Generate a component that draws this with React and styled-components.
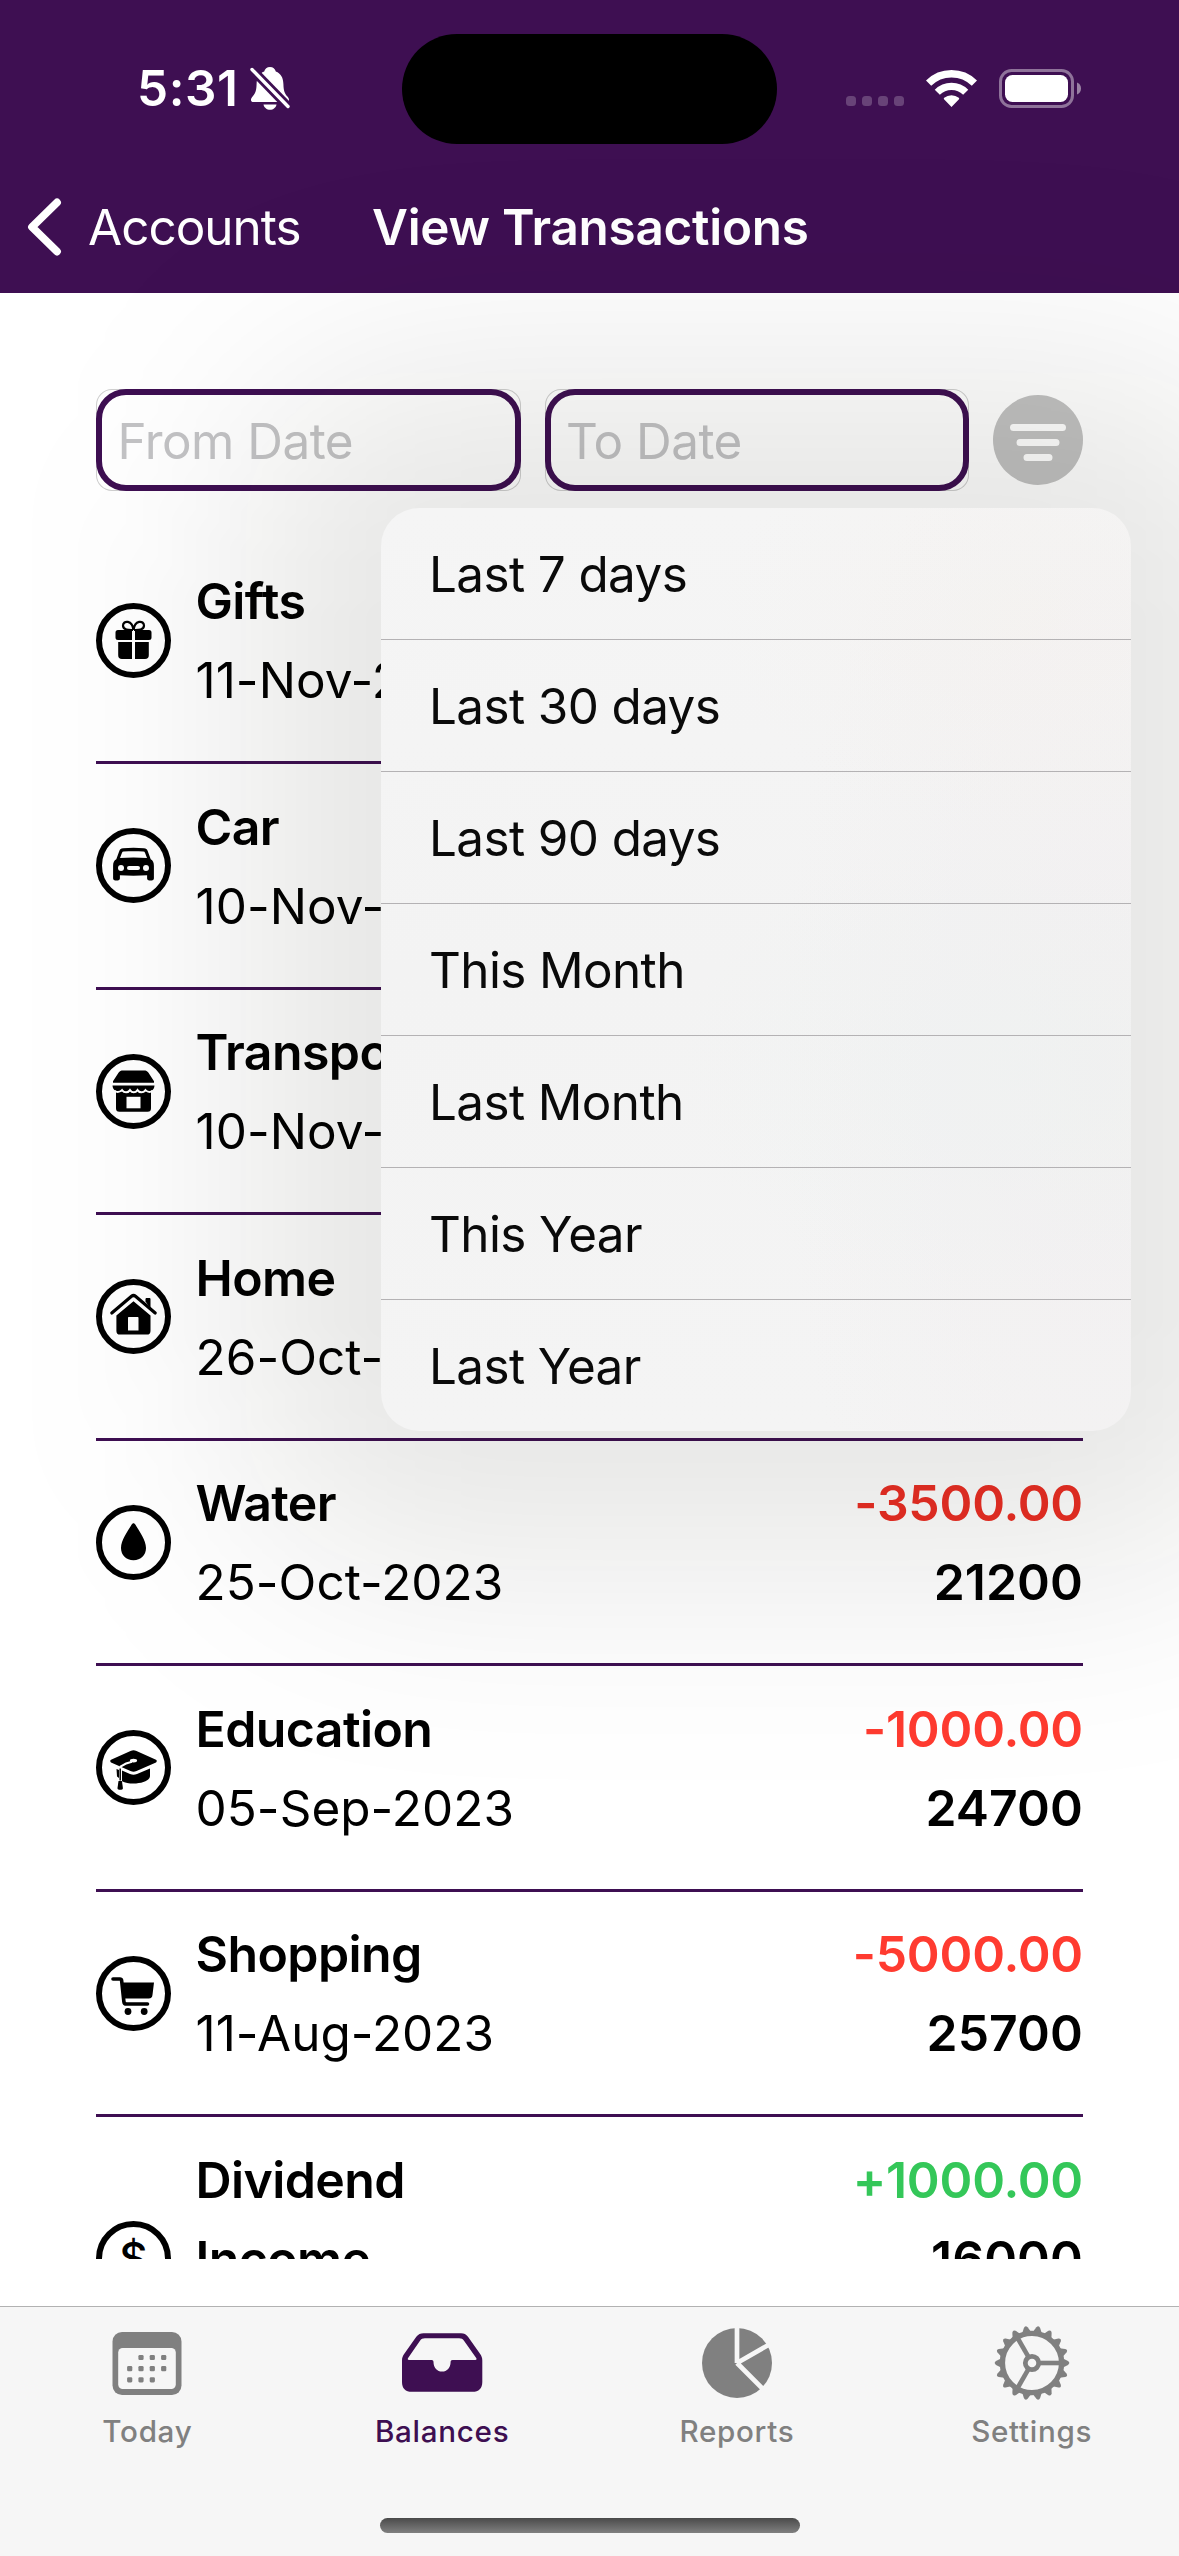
import React from "react";
import styled, { createGlobalStyle } from "styled-components";

const PURPLE = "#3e0f52";
const GREY = "#808080";

const GlobalStyle = createGlobalStyle`
  * { box-sizing: border-box; }
  html, body { margin: 0; padding: 0; background: #fff; }
  body { font-family: Inter, "Liberation Sans", sans-serif; -webkit-font-smoothing: antialiased; }
  svg { display: block; flex: none; }
`;

const Screen = styled.div`
  position: relative;
  display: flex;
  flex-direction: column;
  width: 1179px;
  height: 2556px;
  overflow: hidden;
  background: #fff;
  color: #000;
  font-size: 49.4px;
`;

const Header = styled.header`
  height: 293px;
  flex: none;
  background: ${PURPLE};
  color: #fff;
`;

const StatusBar = styled.div`
  display: grid;
  grid-template-columns: 402px 375px 1fr;
  height: 161px;
  padding-top: 33px;
`;

const Clock = styled.div`
  display: flex;
  align-items: center;
  height: 110px;
  padding-left: 137px;
  font-weight: 600;
  letter-spacing: 0.6px;
  gap: 11px;
`;

const Island = styled.div`
  height: 110px;
  margin-top: 1px;
  border-radius: 55px;
  background: #000;
`;

const StatusIcons = styled.div`
  display: flex;
  align-items: center;
  height: 110px;
  padding-left: 69px;
`;

const NavBar = styled.nav`
  display: flex;
  align-items: center;
  height: 132px;
  padding-left: 27px;
`;

const BackLabel = styled.span`
  width: 310px;
  padding-left: 26px;
  line-height: 60px;
  letter-spacing: -0.95px;
`;

const Title = styled.h1`
  margin: 0;
  font-size: inherit;
  font-weight: 600;
  line-height: 60px;
  letter-spacing: -0.25px;
`;

const Content = styled.main`
  display: flex;
  flex-direction: column;
  flex: 1;
  padding: 96px 96px 0;
`;

const Filters = styled.div`
  display: flex;
  align-items: center;
  gap: 24px;
  height: 102px;
  flex: none;
`;

const FieldFrame = styled.div`
  width: 425px;
  height: 102px;
  border-radius: 16px;
  box-shadow: inset 0 0 0 1px #cfcfcf;
`;

const Field = styled.div`
  display: flex;
  align-items: center;
  height: 102px;
  padding: 2px 0 0 15.5px;
  border: 6px solid ${PURPLE};
  border-radius: 30px;
  background: #fff;
  color: #c3c3c5;
  letter-spacing: -0.5px;
`;

const List = styled.section`
  margin-top: 47.5px;
  height: 1720.5px;
  overflow: hidden;
`;

const Row = styled.article`
  display: flex;
  align-items: center;
  padding: 22.5px 0 42px;
  border-bottom: 3px solid ${PURPLE};
`;

const Badge = styled.div`
  display: flex;
  align-items: center;
  justify-content: center;
  width: 75px;
  height: 75px;
  flex: none;
  border: 6px solid #000;
  border-radius: 50%;
  background: #fff;
  svg { margin: -6px; }
`;

const Dollar = styled.span`
  font-size: 44px;
  font-weight: 500;
  line-height: 63px;
`;

const Details = styled.div`
  flex: 1;
  height: ${(p) => (p.$tall ? 237 : 158)}px;
  align-self: flex-start;
  padding: 1px 0 0 24.5px;
  line-height: 79px;
`;

const Name = styled.div`
  font-size: 50px;
  font-weight: 600;
  letter-spacing: -0.6px;
`;

const TwoLineName = styled(Name)`
  width: 260px;
`;

const When = styled.div`
  letter-spacing: 0.08px;
`;

const Figures = styled.div`
  align-self: flex-start;
  height: 158px;
  padding-top: 1px;
  text-align: right;
  font-size: 49.8px;
  font-weight: 600;
  line-height: 79px;
`;

const Amount = styled.div`
  letter-spacing: -0.2px;
  color: ${(p) => (p.$positive ? "#34c759" : p.$dimmed ? "#eb2e24" : "#ff3b30")};
`;

const Balance = styled.div`
  letter-spacing: 0.1px;
`;

const MenuShade = styled.div`
  position: absolute;
  left: 246px;
  top: 373px;
  width: 1020px;
  height: 1193px;
  border-radius: 150px;
  background: rgba(10, 10, 0, 0.1);
  filter: blur(112px);
`;

const Menu = styled.div`
  position: absolute;
  left: 381px;
  top: 508px;
  width: 750px;
  border-radius: 38px;
  overflow: hidden;
  background:
    radial-gradient(ellipse 300px 220px at 640px 110px, rgba(245, 240, 236, 0.4), transparent),
    radial-gradient(ellipse 340px 240px at 640px 560px, rgba(238, 242, 241, 0.6), transparent),
    radial-gradient(ellipse 320px 700px at 720px 560px, rgba(241, 238, 239, 0.7), transparent),
    linear-gradient(#f5f5f5, #f3f3f3 50%, #f4f4f4);
`;

const MenuItem = styled.div`
  display: flex;
  align-items: center;
  height: ${(p) => (p.$last ? 131 : 132)}px;
  padding-left: 48px;
  border-bottom: ${(p) => (p.$last ? "none" : "1px solid #b4b2b4")};
  color: #0a0a0a;
  letter-spacing: -0.6px;
`;

const TabBar = styled.footer`
  display: grid;
  grid-template-columns: repeat(4, 1fr);
  grid-template-rows: 211px 38px;
  flex: none;
  height: 250px;
  border-top: 1px solid #b2b2b2;
  background: #f6f6f6;
`;

const Tab = styled.div`
  display: flex;
  flex-direction: column;
  align-items: center;
  padding-top: 16px;
  color: ${(p) => (p.$active ? PURPLE : GREY)};
  font-size: 29.6px;
  font-weight: 500;
  line-height: 36px;
  letter-spacing: 0.7px;
  svg { margin-bottom: 8px; }
`;

const HomeIndicator = styled.div`
  grid-column: 1 / -1;
  justify-self: center;
  width: 420px;
  height: 15px;
  border-radius: 8px;
  background: linear-gradient(#4a4a4a, #808080);
`;

const BellOff = () => (
  <svg width="40" height="44" viewBox="0 0 40 44" fill="#fff">
    <path d="M20 1c-3 0-5.200 1.800-5.800 4.600C9 7.600 6.800 12 6.600 18c-.2 7-1.300 9.500-4 12.500C0 33.400.6 36 3.500 36h33c2.900 0 3.500-2.600.9-5.500-2.700-3-3.800-5.500-4-12.500-.2-6-2.400-10.400-7.600-12.400C25.200 2.800 23 1 20 1z" />
    <path d="M13.500 38.500h13c-.6 3.200-3.200 5.300-6.500 5.300s-5.900-2.100-6.500-5.300z" />
    <path d="M2 3.500 38 40.500" stroke={PURPLE} strokeWidth="9" />
    <path d="M2 3.500 38 40.500" stroke="#fff" strokeWidth="3.400" strokeLinecap="round" />
  </svg>
);

const Signal = () => (
  <svg width="58" height="10" viewBox="0 0 58 10" fill="rgba(255,255,255,.22)">
    {[0, 16, 32, 48].map((x) => (
      <rect key={x} x={x} y="0" width="10" height="10" rx="3.500" />
    ))}
  </svg>
);

const SignalSlot = styled.div`
  padding: 26px 22px 0 0;
`;

const BatterySlot = styled.div`
  padding-left: 22px;
`;

const Wifi = () => (
  <svg width="51" height="37" viewBox="0 0 51 37" fill="none" stroke="#fff">
    <path d="M2.600 13.200a32.600 32.600 0 0 1 45.800 0" strokeWidth="7.400" />
    <path d="M11.300 22.200a20 20 0 0 1 28.400 0" strokeWidth="7.200" />
    <path d="M25.500 37 18 29.200c-.4-.5-.3-1 .2-1.400a11.500 11.500 0 0 1 14.600 0c.5.400.6.900.2 1.400z" fill="#fff" stroke="none" />
  </svg>
);

const Battery = () => (
  <svg width="83" height="39" viewBox="0 0 83 39">
    <rect x="1.500" y="1.500" width="72" height="36" rx="11" fill="none" stroke="#fff" strokeOpacity=".42" strokeWidth="3" />
    <rect x="6" y="6" width="63" height="27" rx="7.500" fill="#fff" />
    <path d="M78 13.500c2.600 1 4 3.300 4 6s-1.400 5-4 6z" fill="#fff" fillOpacity=".48" />
  </svg>
);

const Chevron = () => (
  <svg width="35" height="58" viewBox="0 0 35 58" fill="none" stroke="#fff" strokeWidth="7.800" strokeLinecap="round" strokeLinejoin="round">
    <path d="M30 4.500 5 29l25 24.500" />
  </svg>
);

const FilterIcon = () => (
  <svg width="90" height="90" viewBox="0 0 90 90">
    <circle cx="45" cy="45" r="45" fill="#c2c2c2" />
    <g stroke="#fff" strokeWidth="7" strokeLinecap="round">
      <path d="M20.500 32.500h49M27 47.500h36M34 62.500h22" />
    </g>
  </svg>
);

const Glyph = ({ children }) => (
  <svg width="75" height="75" viewBox="0 0 75 75" fill="#000">
    {children}
  </svg>
);

const glyphs = {
  gift: (
    <Glyph>
      <path d="M37 27c-3 0-10 .5-10-4.500 0-5.500 9.500-5.500 10.400 4.500M38 27c3 0 10 .5 10-4.500 0-5.500-9.500-5.500-10.400 4.500" fill="none" stroke="#000" strokeWidth="2.200" />
      <path d="M22 27h14v10H22a2.500 2.500 0 0 1-2.500-2.500v-5A2.500 2.500 0 0 1 22 27zM39 27h14a2.500 2.500 0 0 1 2.500 2.500v5A2.500 2.500 0 0 1 53 37H39z" />
      <path d="M22.200 39H36v17H26a3.800 3.800 0 0 1-3.800-3.800zM39 39h13.800v13.200A3.800 3.800 0 0 1 49 56H39z" />
    </Glyph>
  ),
  car: (
    <Glyph>
      <path fillRule="evenodd" d="M27 20.300c7-.7 14-.7 21 0 2 .2 3 1 3.700 2.700l3 8.300c2.200 1.300 3.200 3.300 3.200 6.500v12.400c0 1.400-.8 2.200-2.200 2.200h-2.400c-1.400 0-2.200-.8-2.200-2.200v-3c-8.500.6-18.700.6-27.200 0v3c0 1.400-.8 2.200-2.200 2.200h-2.400c-1.400 0-2.200-.8-2.200-2.200V37.800c0-3.200 1-5.200 3.200-6.500l3-8.300c.7-1.700 1.700-2.500 3.700-2.700zM27.600 23.500c-.8.1-1.300.5-1.600 1.200l-2 5.400c9-.8 18-.8 27 0l-2-5.400c-.3-.7-.8-1.100-1.600-1.200-6.600-.5-13.200-.5-19.800 0z" />
      <circle cx="25" cy="40" r="3" fill="#fff" />
      <circle cx="50" cy="40" r="3" fill="#fff" />
      <rect x="31" y="38" width="13" height="4" rx="2" fill="#fff" />
    </Glyph>
  ),
  shop: (
    <Glyph>
      <path d="M27 16.500h21c2 0 3.300.6 4.500 2.200L58 27.300v1.500H17v-1.500l5.500-8.600c1.200-1.600 2.500-2.200 4.500-2.200z" />
      <path d="M16.500 31.500h42c-.2 2.500-1 4.700-3.500 5v17.800c0 2.500-1 3.500-3.500 3.500h-28c-2.500 0-3.500-1-3.500-3.500V36.500c-2.500-.3-3.300-2.500-3.500-5z" />
      <path d="M19 37c2 1.500 5 1 7-.9 2.300 3 6 3 8 0 2.200 3 5.300 3 7.500 0 2 3 5.700 3 8 0 2 1.900 4.500 2.400 7 .9" fill="none" stroke="#fff" strokeWidth="2" />
      <rect x="30.500" y="42.800" width="14" height="11.500" fill="#fff" />
    </Glyph>
  ),
  home: (
    <Glyph>
      <path d="M15.800 34 35.500 17.300c1.400-1.100 2.600-1.100 4 0L59.200 34" fill="none" stroke="#000" strokeWidth="3.200" strokeLinecap="round" />
      <path d="M49.500 22.500v-2.300c0-.8.400-1.200 1.200-1.200h2.600c.8 0 1.200.4 1.200 1.200v9.600z" />
      <path fillRule="evenodd" d="M37.500 22.300 54.500 36.500V52c0 2.500-1.200 3.600-3.600 3.600H24c-2.400 0-3.600-1.100-3.600-3.600V36.500zM32 39v12.500h10.500V39c0-.6-.3-1-1-1H33c-.7 0-1 .4-1 1z" />
    </Glyph>
  ),
  water: (
    <Glyph>
      <path d="M37.500 18.300c.8 0 1.300.6 1.800 1.300C43.500 26.500 50 35.500 50 43c0 7.200-5.200 12.200-12.500 12.200S25 50.200 25 43c0-7.500 6.500-16.500 10.700-23.400.5-.7 1-1.300 1.800-1.300z" />
    </Glyph>
  ),
  school: (
    <Glyph>
      <path d="m15 29.800 19.500-8.700c2.200-1 3.800-1 6 0L60 29.800c1 .6 1 2 0 2.600l-19.500 8.700c-2.200 1-3.800 1-6 0L15 32.400c-1-.6-1-2 0-2.600z" />
      <path d="M24 36.800c4-2.700 8-4.400 12-5" fill="none" stroke="#fff" strokeWidth="2" />
      <ellipse cx="37.500" cy="30.600" rx="3.600" ry="1.900" fill="#fff" />
      <path d="m20.500 39 2.500 1v8l-2-1.500zM26 40.500l8 3.400c2.600 1 4.400 1 7 0L54 38.500V46c0 4.500-8 7.500-16.500 7.500-4.500 0-8.500-.8-11.500-2.300z" />
      <path d="M24.200 38.500v12" stroke="#000" strokeWidth="1.500" />
      <path d="M22.500 51h3.400l1 7c.1 1.200-.6 1.700-1.600 1.700h-2.200c-1 0-1.700-.5-1.600-1.700z" />
    </Glyph>
  ),
  cart: (
    <Glyph>
      <path d="M17 23h7c1 0 1.400.4 1.600 1.400l2.300 21.300c.2 2 1 2.300 2.700 2.300h20.900" fill="none" stroke="#000" strokeWidth="3.600" strokeLinecap="round" strokeLinejoin="round" />
      <path d="M25 26.500h33l-1.500 12.300c-.3 2.600-1.200 3.600-3.800 3.600H27z" />
      <circle cx="32" cy="55.500" r="3.400" />
      <circle cx="48.200" cy="55.500" r="3.400" />
    </Glyph>
  ),
  dollar: <Dollar>$</Dollar>,
};

const TodayIcon = () => (
  <svg width="76" height="82" viewBox="0 0 76 82" fill={GREY}>
    <rect x="3.500" y="9" width="69" height="63" rx="9.500" />
    <rect x="9.200" y="25" width="57.600" height="41" rx="4.500" fill="#f6f6f6" />
    {[
      [32, 34.500], [43.300, 34.500], [54.700, 34.500],
      [20.700, 45.600], [32, 45.600], [43.300, 45.600], [54.700, 45.600],
      [20.700, 56.800], [32, 56.800], [43.300, 56.800],
    ].map(([x, y]) => (
      <rect key={`${x}-${y}`} x={x - 2.600} y={y - 2.600} width="5.200" height="5.200" rx="1.300" />
    ))}
  </svg>
);

const TrayIcon = () => (
  <svg width="82" height="82" viewBox="0 0 82 82">
    <path d="M22.500 10.200h37.500c3 0 5.200 1 7 3.500l12 17c1.500 2.200 2.300 4 2.300 6.800V59c0 6.500-3.500 9.800-9.800 9.800H10.800C4.500 68.800 1 65.500 1 59V37.500c0-2.800.8-4.600 2.300-6.800l12-17c1.900-2.500 4.200-3.500 7.200-3.500z" fill={PURPLE} />
    <path d="M24 15.300h34c2.400 0 3.700.7 5 2.500L75.200 35c.7 1.100.3 2-.9 2H51.500c-1.300 0-1.900.7-1.900 2 0 5.800-3.600 9.600-8.500 9.600s-8.600-3.800-8.600-9.600c0-1.300-.6-2-1.900-2H8c-1.200 0-1.600-.9-.9-2L19 17.800c1.300-1.800 2.600-2.500 5-2.500z" fill="#f6f6f6" />
  </svg>
);

const PieIcon = () => (
  <svg width="72" height="82" viewBox="0 0 72 82">
    <circle cx="36" cy="40" r="35" fill={GREY} />
    <path d="M36 40V2M36 40 70 20.500M36 40 63 67" stroke="#f6f6f6" strokeWidth="4.700" fill="none" />
  </svg>
);

const GearIcon = () => (
  <svg width="78" height="82" viewBox="-39 -40 78 82" fill="none" stroke={GREY}>
    <circle r="29.600" strokeWidth="5.400" />
    <circle r="6.700" strokeWidth="4.800" />
    {[0, 120, 240].map((a) => (
      <path key={a} d="M8 0H28" strokeWidth="4.600" transform={`rotate(${a})`} />
    ))}
    {Array.from({ length: 18 }, (_, i) => (
      <path key={i} d="M31-4.500 36-1.900Q38.600 0 36 1.900L31 4.500z" fill={GREY} stroke="none" transform={`rotate(${i * 20})`} />
    ))}
  </svg>
);

const transactions = [
  { icon: "gift", name: "Gifts", date: "11-Nov-2023" },
  { icon: "car", name: "Car", date: "10-Nov-2023" },
  { icon: "shop", name: "Transport", date: "10-Nov-2023" },
  { icon: "home", name: "Home", date: "26-Oct-2023" },
  { icon: "water", name: "Water", date: "25-Oct-2023", amount: "-3500.00", balance: "21200", dimmed: true },
  { icon: "school", name: "Education", date: "05-Sep-2023", amount: "-1000.00", balance: "24700" },
  { icon: "cart", name: "Shopping", date: "11-Aug-2023", amount: "-5000.00", balance: "25700" },
  { icon: "dollar", name: "Dividend Income", amount: "+1000.00", balance: "16000" },
];

const ranges = ["Last 7 days", "Last 30 days", "Last 90 days", "This Month", "Last Month", "This Year", "Last Year"];

function Transaction({ icon, name, date, amount, balance, dimmed }) {
  const NameText = date ? Name : TwoLineName;
  return (
    <Row>
      <Badge>{glyphs[icon]}</Badge>
      <Details $tall={!date}>
        <NameText>{name}</NameText>
        {date && <When>{date}</When>}
      </Details>
      {amount && (
        <Figures>
          <Amount $positive={amount.startsWith("+")} $dimmed={dimmed}>{amount}</Amount>
          <Balance>{balance}</Balance>
        </Figures>
      )}
    </Row>
  );
}

export default function App() {
  return (
    <Screen>
      <GlobalStyle />
      <Header>
        <StatusBar>
          <Clock>
            5:31
            <BellOff />
          </Clock>
          <Island />
          <StatusIcons>
            <SignalSlot><Signal /></SignalSlot>
            <Wifi />
            <BatterySlot><Battery /></BatterySlot>
          </StatusIcons>
        </StatusBar>
        <NavBar>
          <Chevron />
          <BackLabel>Accounts</BackLabel>
          <Title>View Transactions</Title>
        </NavBar>
      </Header>
      <Content>
        <Filters>
          <FieldFrame><Field>From Date</Field></FieldFrame>
          <FieldFrame><Field>To Date</Field></FieldFrame>
          <FilterIcon />
        </Filters>
        <List>
          {transactions.map((t) => (
            <Transaction key={t.name} {...t} />
          ))}
        </List>
      </Content>
      <MenuShade />
      <Menu>
        {ranges.map((label, i) => (
          <MenuItem key={label} $last={i === ranges.length - 1}>{label}</MenuItem>
        ))}
      </Menu>
      <TabBar>
        <Tab><TodayIcon />Today</Tab>
        <Tab $active><TrayIcon />Balances</Tab>
        <Tab><PieIcon />Reports</Tab>
        <Tab><GearIcon />Settings</Tab>
        <HomeIndicator />
      </TabBar>
    </Screen>
  );
}
